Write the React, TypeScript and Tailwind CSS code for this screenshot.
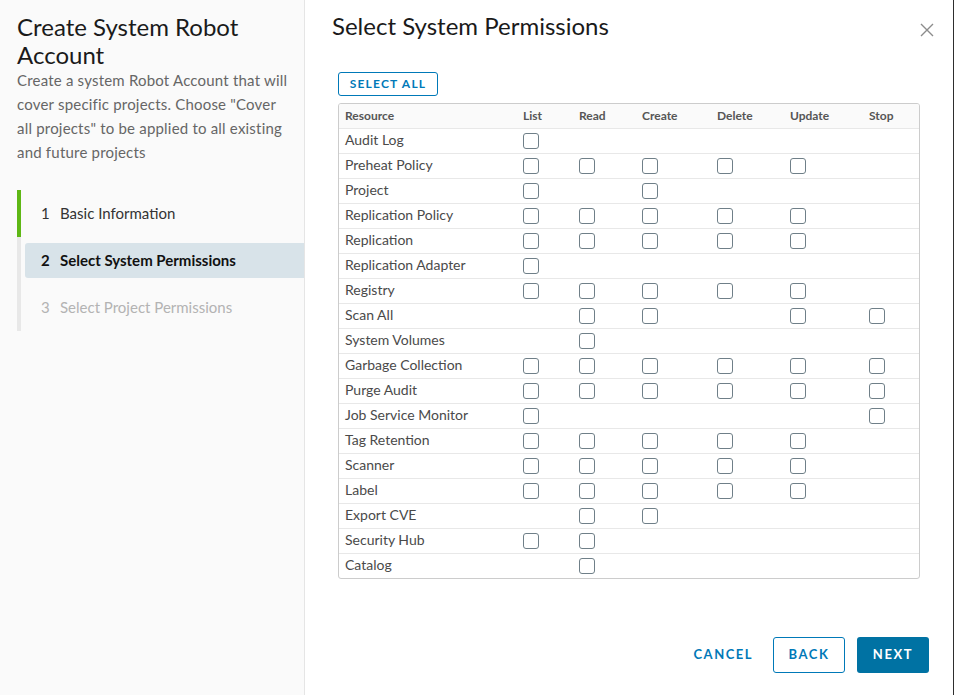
import { FC, ReactElement } from "react";

type TPerm = "L" | "R" | "C" | "D" | "U" | "S";

const columns: { key: TPerm; label: string }[] = [
  { key: "L", label: "List" },
  { key: "R", label: "Read" },
  { key: "C", label: "Create" },
  { key: "D", label: "Delete" },
  { key: "U", label: "Update" },
  { key: "S", label: "Stop" },
];

const rows: { name: string; perms: TPerm[] }[] = [
  { name: "Audit Log", perms: ["L"] },
  { name: "Preheat Policy", perms: ["L", "R", "C", "D", "U"] },
  { name: "Project", perms: ["L", "C"] },
  { name: "Replication Policy", perms: ["L", "R", "C", "D", "U"] },
  { name: "Replication", perms: ["L", "R", "C", "D", "U"] },
  { name: "Replication Adapter", perms: ["L"] },
  { name: "Registry", perms: ["L", "R", "C", "D", "U"] },
  { name: "Scan All", perms: ["R", "C", "U", "S"] },
  { name: "System Volumes", perms: ["R"] },
  { name: "Garbage Collection", perms: ["L", "R", "C", "D", "U", "S"] },
  { name: "Purge Audit", perms: ["L", "R", "C", "D", "U", "S"] },
  { name: "Job Service Monitor", perms: ["L", "S"] },
  { name: "Tag Retention", perms: ["L", "R", "C", "D", "U"] },
  { name: "Scanner", perms: ["L", "R", "C", "D", "U"] },
  { name: "Label", perms: ["L", "R", "C", "D", "U"] },
  { name: "Export CVE", perms: ["R", "C"] },
  { name: "Security Hub", perms: ["L", "R"] },
  { name: "Catalog", perms: ["R"] },
];

const gridCols =
  "grid grid-cols-[178px_56px_63px_75px_73px_79px_1fr]";

const Checkbox: FC = (): ReactElement => (
  <span className="block h-4 w-4 rounded-[3px] border border-[#6f7f88] bg-white" />
);

const Steps: FC = (): ReactElement => (
  <div className="relative ml-[17px] mt-[26px] flex flex-col">
    <div className="absolute left-0 top-0 h-[141px] w-1 bg-[#e8e8e8]" />
    <div className="absolute left-0 top-0 h-[47px] w-1 bg-[#5eb715]" />
    <div className="flex h-[47px] items-center pl-6 text-[15px] text-[#333]">
      <span className="w-[19px]">1</span>
      <span>Basic Information</span>
    </div>
    <div className="flex h-[47px] items-center pl-2">
      <div className="flex h-[35px] w-full items-center rounded-l-[3px] bg-[#d8e3e9] pl-4 text-[15px] font-bold text-[#111]">
        <span className="w-[19px]">2</span>
        <span>Select System Permissions</span>
      </div>
    </div>
    <div className="flex h-[47px] items-center pl-6 text-[15px] text-[#b3b3b3]">
      <span className="w-[19px]">3</span>
      <span>Select Project Permissions</span>
    </div>
  </div>
);

export default function App(): ReactElement {
  return (
    <main
      className="flex h-[695px] w-[954px] overflow-hidden bg-white"
      style={{ fontFamily: "Lato, 'Open Sans', sans-serif" }}
    >
      {/* Left side: wizard navigation */}
      <aside className="flex w-[305px] shrink-0 flex-col border-r border-[#e5e5e5] bg-[#fafafa]">
        <div className="w-[292px] pl-[17px] pt-[13px]">
          <h1 className="text-[24px] leading-[28px] text-[#1a1a1a]">
            Create System Robot Account
          </h1>
          <p className="mt-[-1px] text-[15px] leading-[24px] tracking-[0.2px] text-[#666]">
            Create a system Robot Account that will cover specific projects.
            Choose "Cover all projects" to be applied to all existing and
            future projects
          </p>
        </div>
        <Steps />
      </aside>

      {/* Right side: permissions */}
      <section className="flex flex-1 flex-col border-r-2 border-[#2e2e2e] pl-[27px] pr-[33px]">
        <div className="flex items-start justify-between pt-[12px]">
          <h2 className="text-[24px] leading-[28px] text-[#1a1a1a]">
            Select System Permissions
          </h2>
          <svg
            width="14"
            height="14"
            viewBox="0 0 14 14"
            className="mr-[-14px] mt-[11px] text-[#8c8c8c]"
          >
            <path
              d="M1 1 L13 13 M13 1 L1 13"
              stroke="currentColor"
              strokeWidth="1.4"
            />
          </svg>
        </div>

        <div className="ml-[6px] mt-[30px]">
          <button className="h-6 w-[100px] rounded-[3px] border border-[#0079b8] text-[12px] font-bold tracking-[1.2px] text-[#0079b8]">
            SELECT ALL
          </button>
        </div>

        <div className="ml-[6px] mt-[7px] w-[582px] overflow-hidden rounded-[3px] border border-[#ccc]">
          <div
            className={`${gridCols} h-[24px] items-center bg-[#fafafa] text-[12px] font-bold text-[#565656]`}
          >
            <span className="pb-[1px] pl-[6px]">Resource</span>
            {columns.map((c) => (
              <span key={c.key} className="pb-[1px] pl-[6px]">
                {c.label}
              </span>
            ))}
          </div>
          {rows.map((row) => (
            <div
              key={row.name}
              className={`${gridCols} h-[25px] items-center border-t border-[#e8e8e8] text-[14px] text-[#4a4a4a]`}
            >
              <span className="pb-[3px] pl-[6px]">{row.name}</span>
              {columns.map((c) => (
                <span key={c.key} className="pl-[6px]">
                  {row.perms.includes(c.key) && <Checkbox />}
                </span>
              ))}
            </div>
          ))}
        </div>

        <div className="mb-[22px] mr-[-9px] mt-auto flex items-center justify-end gap-3">
          <button className="h-9 pl-5 pr-2 text-[13px] font-bold tracking-[1.5px] text-[#0079b8]">
            CANCEL
          </button>
          <button className="h-9 w-[72px] rounded-[3px] border border-[#0079b8] text-[13px] font-bold tracking-[1.6px] text-[#0079b8]">
            BACK
          </button>
          <button className="h-9 w-[72px] rounded-[3px] bg-[#0072a3] text-[13px] font-bold tracking-[1.6px] text-white">
            NEXT
          </button>
        </div>
      </section>
    </main>
  );
}
